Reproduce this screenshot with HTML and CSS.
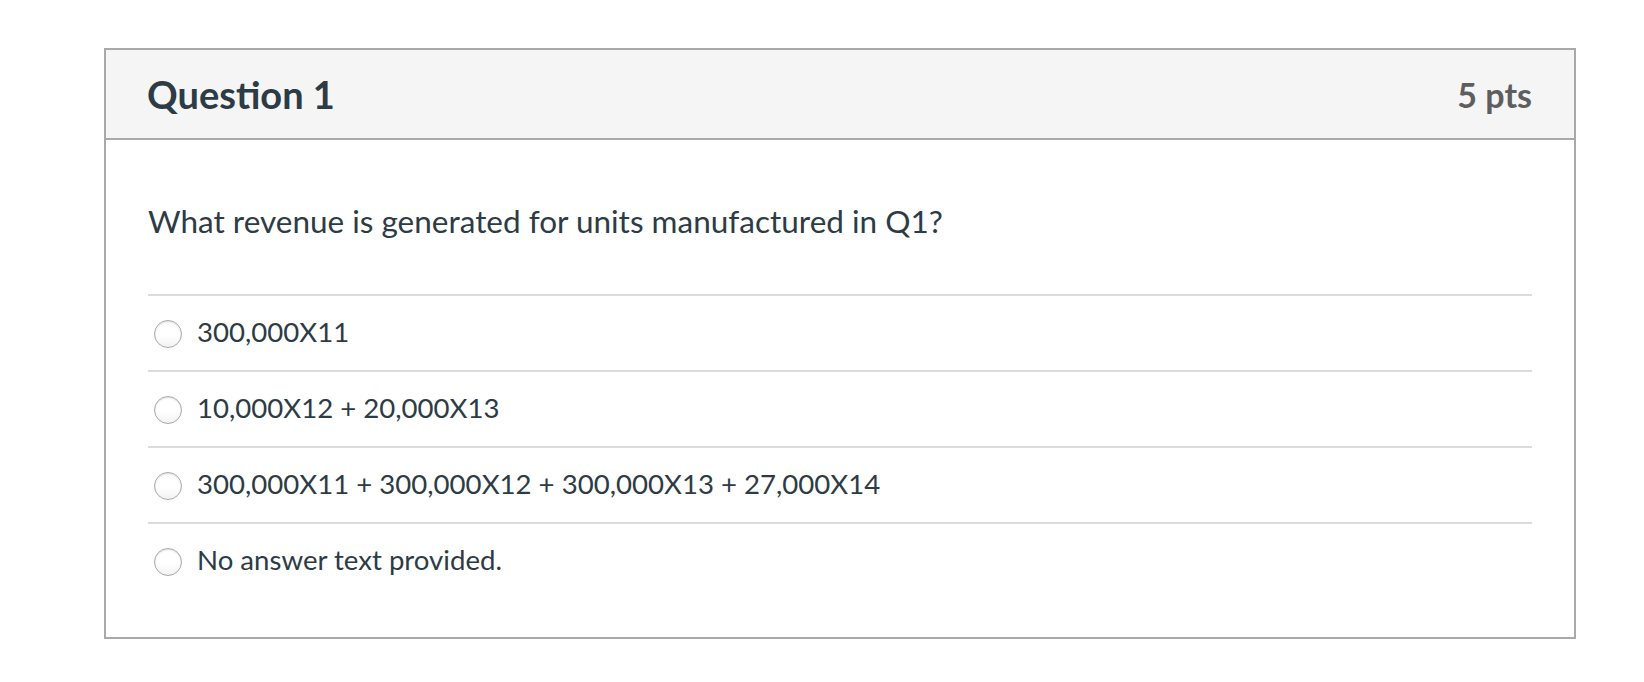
FILE: index.html
```html
<!DOCTYPE html>
<html>
<head>
<meta charset="utf-8">
<link rel="stylesheet" href="styles.css">
</head>
<body>
<div class="card">
  <div class="header">
    <h2 class="title">Question 1</h2>
    <span class="pts">5 pts</span>
  </div>
  <div class="body">
    <p class="qtext">What revenue is generated for units manufactured in Q1?</p>
    <div class="answers">
      <label class="answer"><span class="radio"></span><span class="atext">300,000X11</span></label>
      <label class="answer"><span class="radio"></span><span class="atext">10,000X12 + 20,000X13</span></label>
      <label class="answer"><span class="radio"></span><span class="atext">300,000X11 + 300,000X12 + 300,000X13 + 27,000X14</span></label>
      <label class="answer"><span class="radio"></span><span class="atext">No answer text provided.</span></label>
    </div>
  </div>
</div>
</body>
</html>
```
FILE: styles.css
```css
html, body {
  margin: 0;
  padding: 0;
  background: #ffffff;
}
body {
  font-family: Lato, "Liberation Sans", sans-serif;
  color: #2d3b45;
  padding: 48px 0 0 104px;
}
.card {
  width: 1468px;
  border: 2px solid #a9a9a9;
}
.header {
  height: 88px;
  background: #f5f5f5;
  border-bottom: 2px solid #a9a9a9;
  display: flex;
  align-items: center;
  justify-content: space-between;
  padding: 0 42px 0 41px;
}
.title {
  margin: 0;
  font-size: 38px;
  font-weight: 700;
  color: #2d3b45;
}
.pts {
  font-size: 34px;
  font-weight: 700;
  color: #5e5e5e;
}
.body {
  padding: 57px 42px 39px 42px;
}
.qtext {
  margin: 0 0 49px 0;
  font-size: 31.5px;
  line-height: 48px;
}
.answer {
  display: flex;
  align-items: center;
  height: 74px;
  border-top: 2px solid #dcdcdc;
}
.radio {
  width: 26px;
  height: 26px;
  border-radius: 50%;
  border: 1px solid #a8a8a8;
  background: linear-gradient(#ffffff 0%, #ffffff 55%, #f2f2f2 100%);
  box-shadow: inset 0 1px 2px rgba(0,0,0,0.12);
  margin: 2px 15px 0 6px;
  flex: none;
}
.atext {
  font-size: 27.6px;
  position: relative;
  top: -2px;
}
```
